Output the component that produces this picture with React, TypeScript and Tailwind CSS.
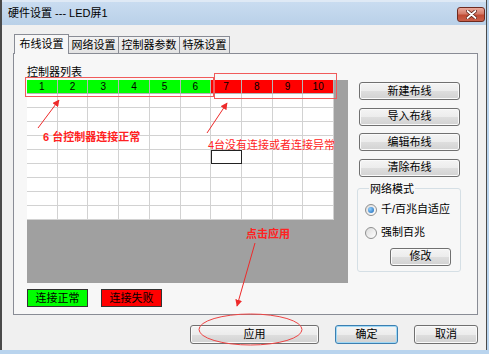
import React from 'react';

const btnBase =
  'flex items-center justify-center rounded-[3px] border text-[11px] leading-none text-black bg-[linear-gradient(to_bottom,#f4f4f4_0%,#ececec_50%,#dedede_51%,#d2d2d2_100%)]';

const Btn: React.FC<{ className?: string; primary?: boolean; children: React.ReactNode }> = ({
  className = '',
  primary,
  children,
}) => (
  <div
    className={`${btnBase} ${
      primary ? 'border-[#3c7fb1] shadow-[inset_0_0_0_1px_#9fd8f5]' : 'border-[#707070] shadow-[inset_0_0_0_1px_#fafafa]'
    } ${className}`}
  >
    {children}
  </div>
);

const Radio: React.FC<{ checked?: boolean; label: string }> = ({ checked, label }) => (
  <div className="flex items-center gap-[4px] h-[14px]">
    <div className="w-[12px] h-[12px] rounded-full border border-[#8e8f8f] bg-[linear-gradient(135deg,#dcdcdc,#ffffff)] flex items-center justify-center">
      {checked && <div className="w-[6px] h-[6px] rounded-full bg-[radial-gradient(circle_at_35%_35%,#8fd0ff,#1a64b4)]" />}
    </div>
    <span className="text-[11px] leading-none text-black">{label}</span>
  </div>
);

export default function App() {
  const tabs = ['布线设置', '网络设置', '控制器参数', '特殊设置'];
  const tabW = [55, 51, 62, 51];
  const rows = Array.from({ length: 9 }, (_, i) => i);
  const cols = Array.from({ length: 10 }, (_, i) => i);

  return (
    <div className="relative w-[489px] h-[354px] overflow-hidden bg-[#b9d4ee] font-['Liberation_Sans','Noto_Sans_CJK_SC',sans-serif]">
      <div className="flex flex-col w-[487px] h-[350px] border-l-2 border-r border-[#4a4a4a] bg-[#f0f0f0]">
        {/* title bar */}
        <div className="relative h-[25px] shrink-0 bg-[linear-gradient(to_bottom,#c9dcf0,#b9d0e8)] border-t-2 border-[#dfe9f5] flex items-center pl-[6px]">
          <span className="text-[11px] text-black leading-none">硬件设置 --- LED屏1</span>
          <div className="absolute right-[1px] top-[5px] w-[28px] h-[15px] rounded-[3px] border border-[#6e2a1f] bg-[linear-gradient(to_bottom,#e9a99b_0%,#d47a68_45%,#c04a33_55%,#c8604a_100%)] flex items-center justify-center">
            <svg width="11" height="9" viewBox="0 0 11 9">
              <path d="M1.5 1 L9.5 8 M9.5 1 L1.5 8" stroke="#5a1d14" strokeWidth="3.4" strokeLinecap="round" />
              <path d="M1.5 1 L9.5 8 M9.5 1 L1.5 8" stroke="#ffffff" strokeWidth="1.8" strokeLinecap="round" />
            </svg>
          </div>
        </div>

        {/* body */}
        <div className="flex-1 pl-[11px] pt-[8px]">
          {/* tabs */}
          <div className="flex items-end h-[20px] pl-[1px]">
            {tabs.map((t, i) => (
              <div
                key={t}
                style={{ width: tabW[i] }}
                className={
                  i === 0
                    ? 'relative z-10 h-[20px] -mb-px bg-[#f7f7f7] border border-b-0 border-[#898c95] flex items-center justify-center text-[11px] leading-none'
                    : 'h-[17px] -ml-px first:ml-0 bg-[linear-gradient(to_bottom,#f2f2f2,#e3e3e3)] border border-b-0 border-[#898c95] flex items-center justify-center text-[11px] leading-none'
                }
              >
                {t}
              </div>
            ))}
          </div>

          {/* panel */}
          <div className="w-[465px] h-[262px] border border-[#898c95] bg-[#f7f7f7] flex pl-[13px] pt-[13px]">
            {/* left column */}
            <div className="w-[321px] flex flex-col">
              <div className="h-[13px] text-[11px] leading-none text-black">控制器列表</div>
              <div className="h-[203px] bg-[#a0a0a0]">
                <div className="w-[307px] grid grid-cols-10">
                  {cols.map((c) => (
                    <div
                      key={c}
                      className={`h-[14px] border-r border-b border-[#b5b5b5] flex items-center justify-center text-[10px] leading-none text-black ${
                        c < 6 ? 'bg-[#00ff00]' : 'bg-[#ff0000]'
                      }`}
                    >
                      {c + 1}
                    </div>
                  ))}
                  {rows.map((r) =>
                    cols.map((c) => (
                      <div
                        key={`${r}-${c}`}
                        className={`h-[14px] bg-white ${
                          r === 4 && c === 6 ? 'border border-[#222]' : 'border-r border-b border-[#d2d2d2]'
                        }`}
                      />
                    ))
                  )}
                </div>
              </div>
              <div className="flex gap-[13px] mt-[6px]">
                <div className="w-[61px] h-[18px] border border-[#333] bg-[#00ff00] flex items-center justify-center text-[11px] leading-none">
                  连接正常
                </div>
                <div className="w-[61px] h-[18px] border border-[#333] bg-[#ff0000] flex items-center justify-center text-[11px] leading-none">
                  连接失败
                </div>
              </div>
            </div>

            {/* right column */}
            <div className="ml-[9px] w-[104px] flex flex-col pt-[15px]">
              <div className="flex flex-col gap-[7.5px] pl-[2px]">
                <Btn className="w-[101px] h-[18px]">新建布线</Btn>
                <Btn className="w-[101px] h-[18px]">导入布线</Btn>
                <Btn className="w-[101px] h-[18px]">编辑布线</Btn>
                <Btn className="w-[101px] h-[18px]">清除布线</Btn>
              </div>
              <fieldset className="mt-[5px] h-[90px] border border-[#d5dfe5] rounded-[3px] pl-[7px] pr-[6px]">
                <legend className="px-[1px] ml-[4px] text-[11px] leading-[14px] text-black">网络模式</legend>
                <div className="flex flex-col gap-[9px] pt-[7px]">
                  <Radio checked label="千/百兆自适应" />
                  <Radio label="强制百兆" />
                </div>
                <div className="flex justify-end mt-[8px]">
                  <Btn className="w-[61px] h-[18px] mr-[3px]">修改</Btn>
                </div>
              </fieldset>
            </div>
          </div>

          {/* dialog buttons */}
          <div className="w-[465px] flex justify-end gap-[16px] mt-[10px]">
            <Btn className="w-[129px] h-[19px]">应用</Btn>
            <Btn primary className="w-[63px] h-[19px]">确定</Btn>
            <Btn className="w-[64px] h-[19px]">取消</Btn>
          </div>
        </div>
      </div>

      {/* annotations */}
      <svg className="absolute inset-0 pointer-events-none" width="489" height="354" viewBox="0 0 489 354">
        <defs>
          <marker id="ah" viewBox="0 0 10 10" refX="9" refY="5" markerWidth="7" markerHeight="7" orient="auto">
            <path d="M0 0 L10 5 L0 10 z" fill="#ee2a2a" />
          </marker>
        </defs>
        <rect x="25.5" y="77.5" width="188" height="19" fill="none" stroke="#f05a5a" strokeWidth="1" />
        <rect x="214.5" y="73.5" width="122" height="25" fill="none" stroke="#f05a5a" strokeWidth="1" />
        <line x1="38" y1="128" x2="59" y2="100" stroke="#ee2a2a" strokeWidth="1" markerEnd="url(#ah)" />
        <line x1="207" y1="133" x2="227" y2="103" stroke="#ee2a2a" strokeWidth="1" markerEnd="url(#ah)" />
        <line x1="255" y1="243" x2="237" y2="306" stroke="#ee2a2a" strokeWidth="1" markerEnd="url(#ah)" />
        <ellipse cx="250.5" cy="329.5" rx="51.5" ry="15.5" fill="none" stroke="#ee4444" strokeWidth="1" />
      </svg>
      <div className="absolute left-[43px] top-[132px] text-[11px] font-bold leading-none text-[#f22] whitespace-nowrap">
        6 台控制器连接正常
      </div>
      <div className="absolute left-[208px] top-[140px] text-[11px] leading-none text-[#f22] whitespace-nowrap">
        4台没有连接或者连接异常
      </div>
      <div className="absolute left-[246px] top-[229px] text-[11px] font-bold leading-none text-[#f22] whitespace-nowrap">
        点击应用
      </div>
    </div>
  );
}
